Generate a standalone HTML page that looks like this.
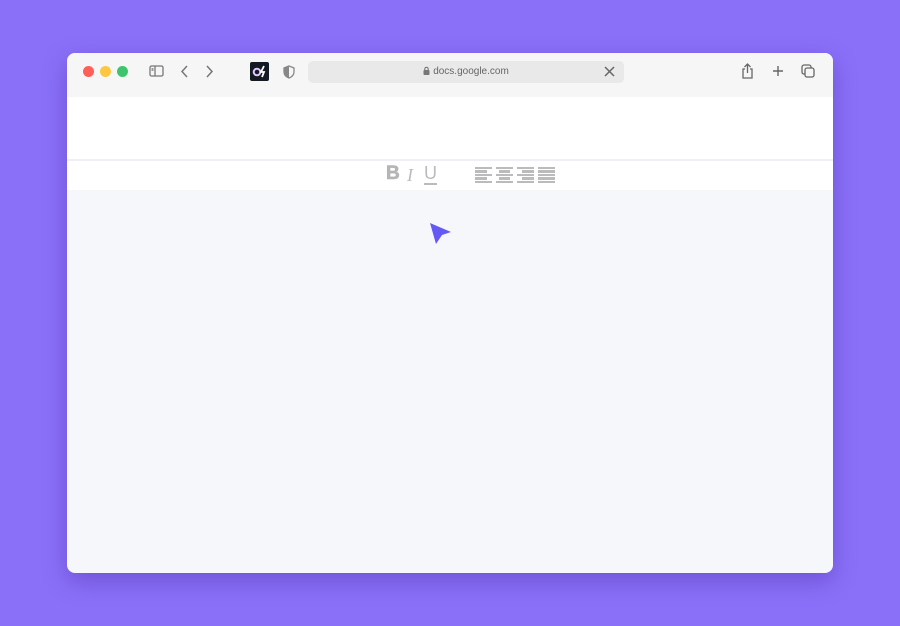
<!DOCTYPE html>
<html><head><style>
body{margin:0;width:900px;height:626px;background:#8a70f8;position:relative;overflow:hidden;font-family:"Liberation Sans",sans-serif}
.win{position:absolute;left:67px;top:53px;width:766px;height:520px;border-radius:8px;background:#f6f7fb;overflow:hidden;box-shadow:0 8px 24px rgba(60,30,150,.35)}
.bar{position:absolute;left:0;top:0;width:100%;height:44px;background:#f6f6f6}
.dot{position:absolute;top:13px;width:11px;height:11px;border-radius:50%}
.white{position:absolute;left:0;top:44px;width:100%;height:62px;background:#fff;border-bottom:2px solid #f0f0f4}
.tb{position:absolute;left:0;top:108px;width:100%;height:29px;background:#fff}
.url{position:absolute;left:241px;top:8px;width:316px;height:22px;background:#e9e9e9;border-radius:5px;font-size:10px;color:#666;text-align:center;line-height:22px}
.al{position:absolute;top:114px;width:17px}
.al i{display:block;height:2.4px;background:#bbb;margin-bottom:1px}
</style></head><body>
<div class="win">
<div class="bar">
<div class="dot" style="left:16px;background:#fe5f57"></div>
<div class="dot" style="left:33px;background:#fdc840"></div>
<div class="dot" style="left:50px;background:#3ec46d"></div>
<svg style="position:absolute;left:82px;top:12px" width="16" height="13"><rect x="1" y="1" width="13" height="10" rx="1.5" fill="none" stroke="#777" stroke-width="1.3"/><line x1="6" y1="1" x2="6" y2="11" stroke="#777" stroke-width="1.3"/><rect x="2.5" y="3" width="2" height="3" fill="#999"/></svg>
<svg style="position:absolute;left:113px;top:12px" width="10" height="13"><path d="M7 1 L2 6.5 L7 12" fill="none" stroke="#777" stroke-width="1.5"/></svg>
<svg style="position:absolute;left:138px;top:12px" width="10" height="13"><path d="M2 1 L7 6.5 L2 12" fill="none" stroke="#777" stroke-width="1.5"/></svg>
<svg style="position:absolute;left:183px;top:9px" width="19" height="19"><rect width="19" height="19" rx="2" fill="#141a22"/><circle cx="7" cy="10" r="3.3" fill="none" stroke="#e0c8ff" stroke-width="2"/><path d="M14 4 L11 10 H14 L12 15" fill="none" stroke="#fff" stroke-width="1.8"/></svg>
<svg style="position:absolute;left:216px;top:12px" width="12" height="14"><path d="M6 1 L11 3 V7 C11 10 8.5 12 6 13 C3.5 12 1 10 1 7 V3 Z" fill="none" stroke="#888" stroke-width="1.3"/><path d="M6 1 V13 C3.5 12 1 10 1 7 V3 Z" fill="#888"/></svg>
<div class="url"><svg width="7" height="9" style="vertical-align:-1px;margin-right:3px"><rect x="0.5" y="4" width="6" height="5" rx="1" fill="#777"/><path d="M1.8 4 V3 A1.7 1.7 0 0 1 5.2 3 V4" fill="none" stroke="#777" stroke-width="1.1"/></svg>docs.google.com</div>
<svg style="position:absolute;left:537px;top:13px" width="11" height="11"><path d="M1 1 L10 10 M10 1 L1 10" stroke="#666" stroke-width="1.5"/></svg>
<svg style="position:absolute;left:674px;top:10px" width="13" height="16"><path d="M4 6 H2 V15 H11 V6 H9 M6.5 10 V1 M3.5 4 L6.5 1 L9.5 4" fill="none" stroke="#666" stroke-width="1.3"/></svg>
<svg style="position:absolute;left:705px;top:12px" width="12" height="12"><path d="M6 1 V11 M1 6 H11" stroke="#666" stroke-width="1.4"/></svg>
<svg style="position:absolute;left:734px;top:11px" width="14" height="14"><rect x="1" y="1" width="9" height="9" rx="2" fill="none" stroke="#666" stroke-width="1.3"/><rect x="4" y="4" width="9" height="9" rx="2" fill="#f6f6f6" stroke="#666" stroke-width="1.3"/></svg>
</div>
<div class="white"></div>
<div class="tb"></div>
<div style="position:absolute;left:319px;top:110px;font-size:19px;font-weight:900;color:#b5b5b5;-webkit-text-stroke:0.6px #b5b5b5">B</div>
<div style="position:absolute;left:340px;top:112px;font-size:18px;font-style:italic;font-family:'Liberation Serif',serif;color:#bbb">I</div>
<div style="position:absolute;left:357px;top:110px;font-size:18px;color:#bbb;border-bottom:2px solid #bbb;line-height:20px">U</div>
<div class="al" style="left:408px"><i></i><i style="width:70%"></i><i></i><i style="width:70%"></i><i></i></div>
<div class="al" style="left:429px"><i></i><i style="width:70%;margin-left:15%"></i><i></i><i style="width:70%;margin-left:15%"></i><i></i></div>
<div class="al" style="left:450px"><i></i><i style="width:70%;margin-left:30%"></i><i></i><i style="width:70%;margin-left:30%"></i><i></i></div>
<div class="al" style="left:471px"><i></i><i></i><i></i><i></i><i></i></div>
<svg style="position:absolute;left:362px;top:169px" width="24" height="24"><path d="M1 1 L22 10 L13 13 L7 22 Z" fill="#6559f6"/></svg>
</div>
</body></html>
